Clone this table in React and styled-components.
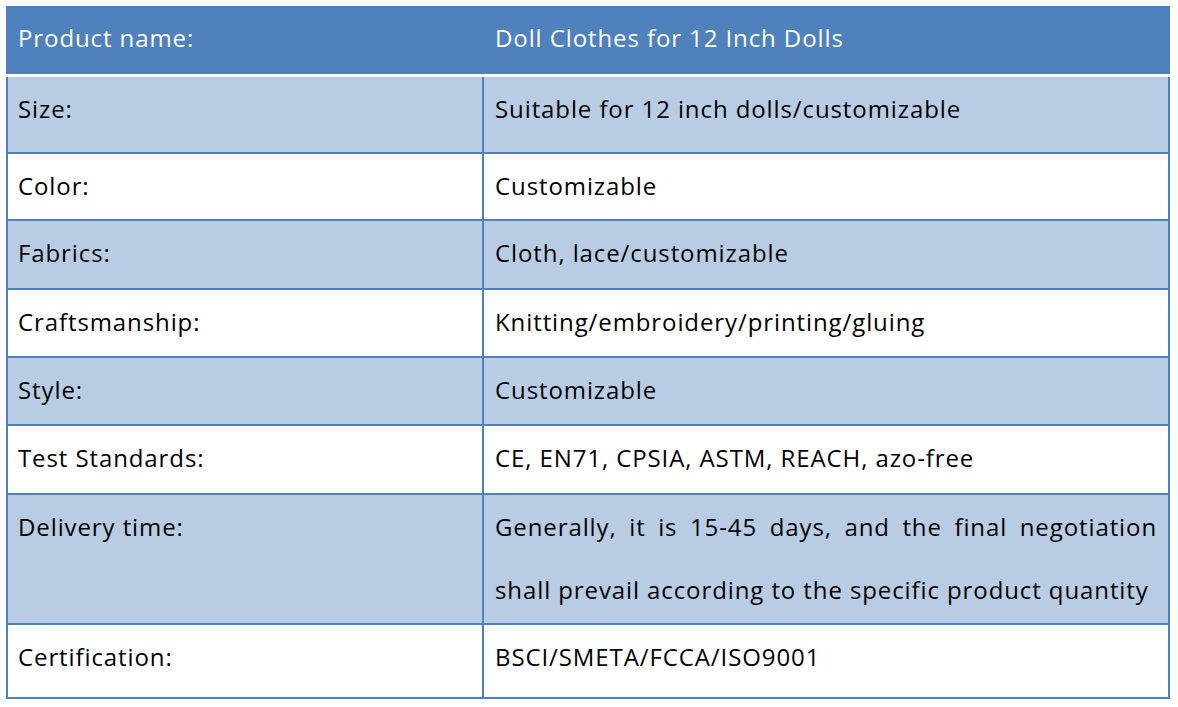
import React from "react";
import styled, { createGlobalStyle } from "styled-components";

const Global = createGlobalStyle`
  html, body { margin: 0; padding: 0; background: #ffffff; }
  body { font-family: "Open Sans", "Liberation Sans", sans-serif; }
`;

const BLUE = "#4f81bd";
const LIGHT = "#b8cce4";

const Page = styled.div`
  padding: 6px 0 0 6px;
  width: 1164px;
`;

const Table = styled.div`
  width: 1164px;
  display: flex;
  flex-direction: column;
  font-size: 24px;
  letter-spacing: 0.9px;
  line-height: 63px;
`;

const Header = styled.div`
  display: grid;
  grid-template-columns: 478px 1fr;
  height: 68px;
  background: ${BLUE};
  border-bottom: 3px solid #ffffff;
  color: #ffffff;
`;

const HeadCell = styled.div`
  padding-left: ${(p) => (p.$first ? "12px" : "11px")};
  white-space: nowrap;
`;

const Body = styled.div`
  border: 2px solid ${BLUE};
  border-top: none;
  display: flex;
  flex-direction: column;
`;

const Row = styled.div`
  display: grid;
  grid-template-columns: 476px 1fr;
  height: ${(p) => p.$h}px;
  background: ${(p) => (p.$shade ? LIGHT : "#ffffff")};
  border-bottom: ${(p) => (p.$last ? "none" : `2px solid ${BLUE}`)};
  color: #000000;
`;

const Label = styled.div`
  padding-left: 10px;
  border-right: 2px solid ${BLUE};
  white-space: nowrap;
`;

const Value = styled.div`
  padding: 0 11px;
`;

const Line = styled.div`
  text-align: ${(p) => (p.$justify ? "justify" : "left")};
  text-align-last: ${(p) => (p.$justify ? "justify" : "auto")};
  white-space: ${(p) => (p.$justify ? "normal" : "nowrap")};
`;

const rows = [
  { label: "Size:", value: ["Suitable for 12 inch dolls/customizable"], h: 75 },
  { label: "Color:", value: ["Customizable"], h: 65 },
  { label: "Fabrics:", value: ["Cloth, lace/customizable"], h: 67 },
  { label: "Craftsmanship:", value: ["Knitting/embroidery/printing/gluing"], h: 66 },
  { label: "Style:", value: ["Customizable"], h: 66 },
  { label: "Test Standards:", value: ["CE, EN71, CPSIA, ASTM, REACH, azo-free"], h: 67 },
  {
    label: "Delivery time:",
    value: [
      "Generally, it is 15-45 days, and the final negotiation",
      "shall prevail according to the specific product quantity",
    ],
    h: 128,
  },
  { label: "Certification:", value: ["BSCI/SMETA/FCCA/ISO9001"], h: 72 },
];

export default function App() {
  return (
    <>
      <Global />
      <Page>
        <Table>
          <Header>
            <HeadCell $first>Product name:</HeadCell>
            <HeadCell>Doll Clothes for 12 Inch Dolls</HeadCell>
          </Header>
          <Body>
            {rows.map((r, i) => (
              <Row key={r.label} $h={r.h} $shade={i % 2 === 0} $last={i === rows.length - 1}>
                <Label>{r.label}</Label>
                <Value>
                  {r.value.map((line, j) => (
                    <Line key={j} $justify={r.value.length > 1 && j < r.value.length - 1}>
                      {line}
                    </Line>
                  ))}
                </Value>
              </Row>
            ))}
          </Body>
        </Table>
      </Page>
    </>
  );
}
